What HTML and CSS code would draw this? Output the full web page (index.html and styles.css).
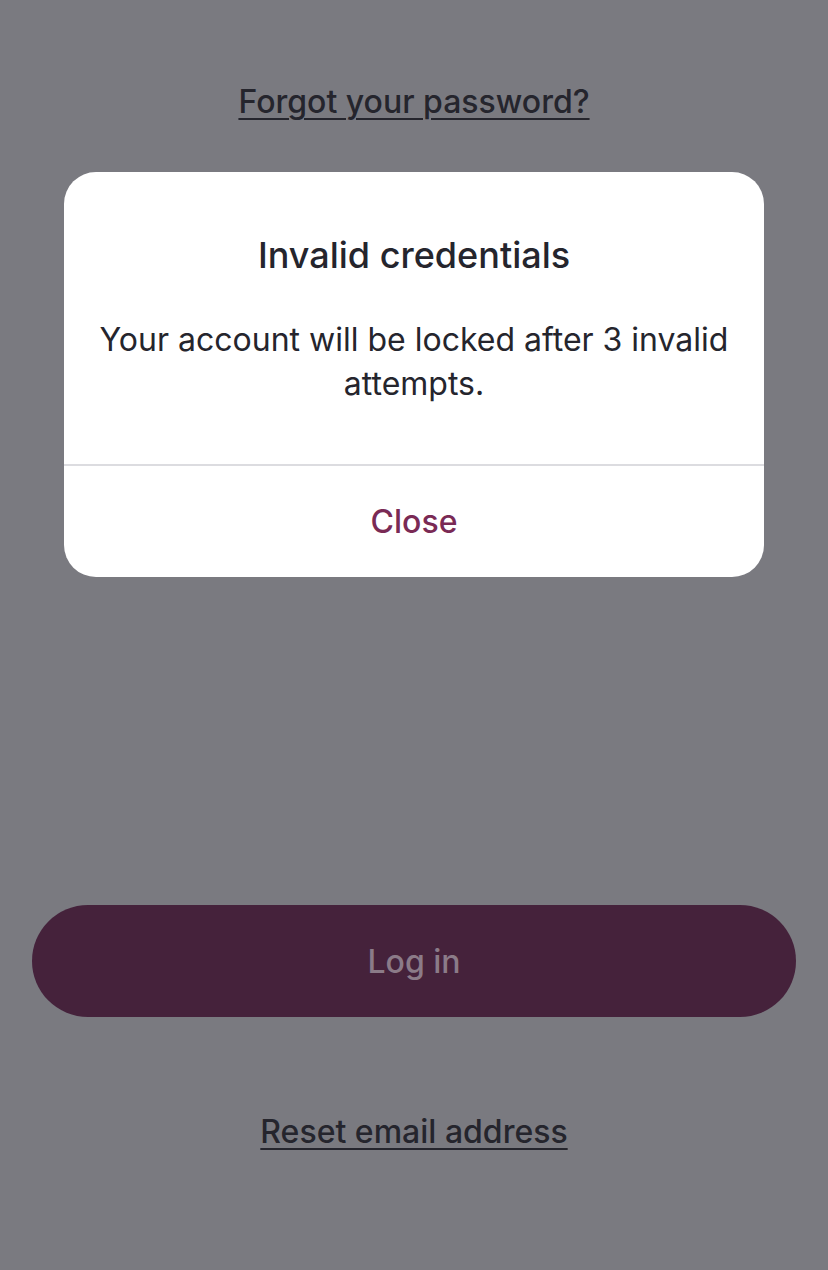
FILE: index.html
```html
<!DOCTYPE html>
<html lang="en">

<head>
    <meta charset="UTF-8">
    <meta name="viewport" content="width=device-width, initial-scale=1.0">
    <title>Log in</title>
    <link rel="stylesheet" href="styles.css">
</head>

<body>
    <div class="page">
        <a href="#" class="link forgot">Forgot your password?</a>

        <button type="button" class="login" disabled>Log in</button>

        <a href="#" class="link reset">Reset email address</a>
    </div>

    <!-- Alert dialog -->
    <div class="dialog" role="alertdialog">
        <div class="dialog-body">
            <h2>Invalid credentials</h2>
            <p>Your account will be locked after 3 invalid attempts.</p>
        </div>
        <button type="button" class="dialog-close">Close</button>
    </div>
</body>

</html>
```
FILE: styles.css
```css
body {
    margin: 0;
    height: 1270px;
    background-color: #7a7a80;
    font-family: Inter, Roboto, "Liberation Sans", sans-serif;
    color: #25252d;
    overflow: hidden;
}

.page {
    display: flex;
    flex-direction: column;
    align-items: center;
    padding: 80px 32px 0;
}

.link {
    color: #25252d;
    font-size: 32px;
    font-weight: 500;
    text-decoration: underline;
    text-decoration-thickness: 2px;
    text-underline-offset: 5px;
    line-height: 44px;
}

.login {
    margin-top: 781px;
    width: 100%;
    height: 112px;
    border: none;
    border-radius: 56px;
    background-color: #45223b;
    color: #8b7b88;
    font-family: inherit;
    font-size: 32px;
    font-weight: 500;
}

.reset {
    margin-top: 93px;
}

/* Dialog */
.dialog {
    position: absolute;
    left: 64px;
    top: 172px;
    width: 700px;
    height: 405px;
    background-color: #fff;
    border-radius: 32px;
    display: flex;
    flex-direction: column;
    overflow: hidden;
}

.dialog-body {
    flex: 1;
    padding: 60px 30px 0;
    text-align: center;
    border-bottom: 2px solid #dcdce0;
}

.dialog-body h2 {
    margin: 0 0 40px;
    font-size: 36px;
    font-weight: 500;
    line-height: 46px;
}

.dialog-body p {
    margin: 0;
    font-size: 32px;
    line-height: 44px;
}

.dialog-close {
    height: 111px;
    border: none;
    background: none;
    color: #7a2a55;
    font-family: inherit;
    font-size: 32px;
    font-weight: 500;
}
```
